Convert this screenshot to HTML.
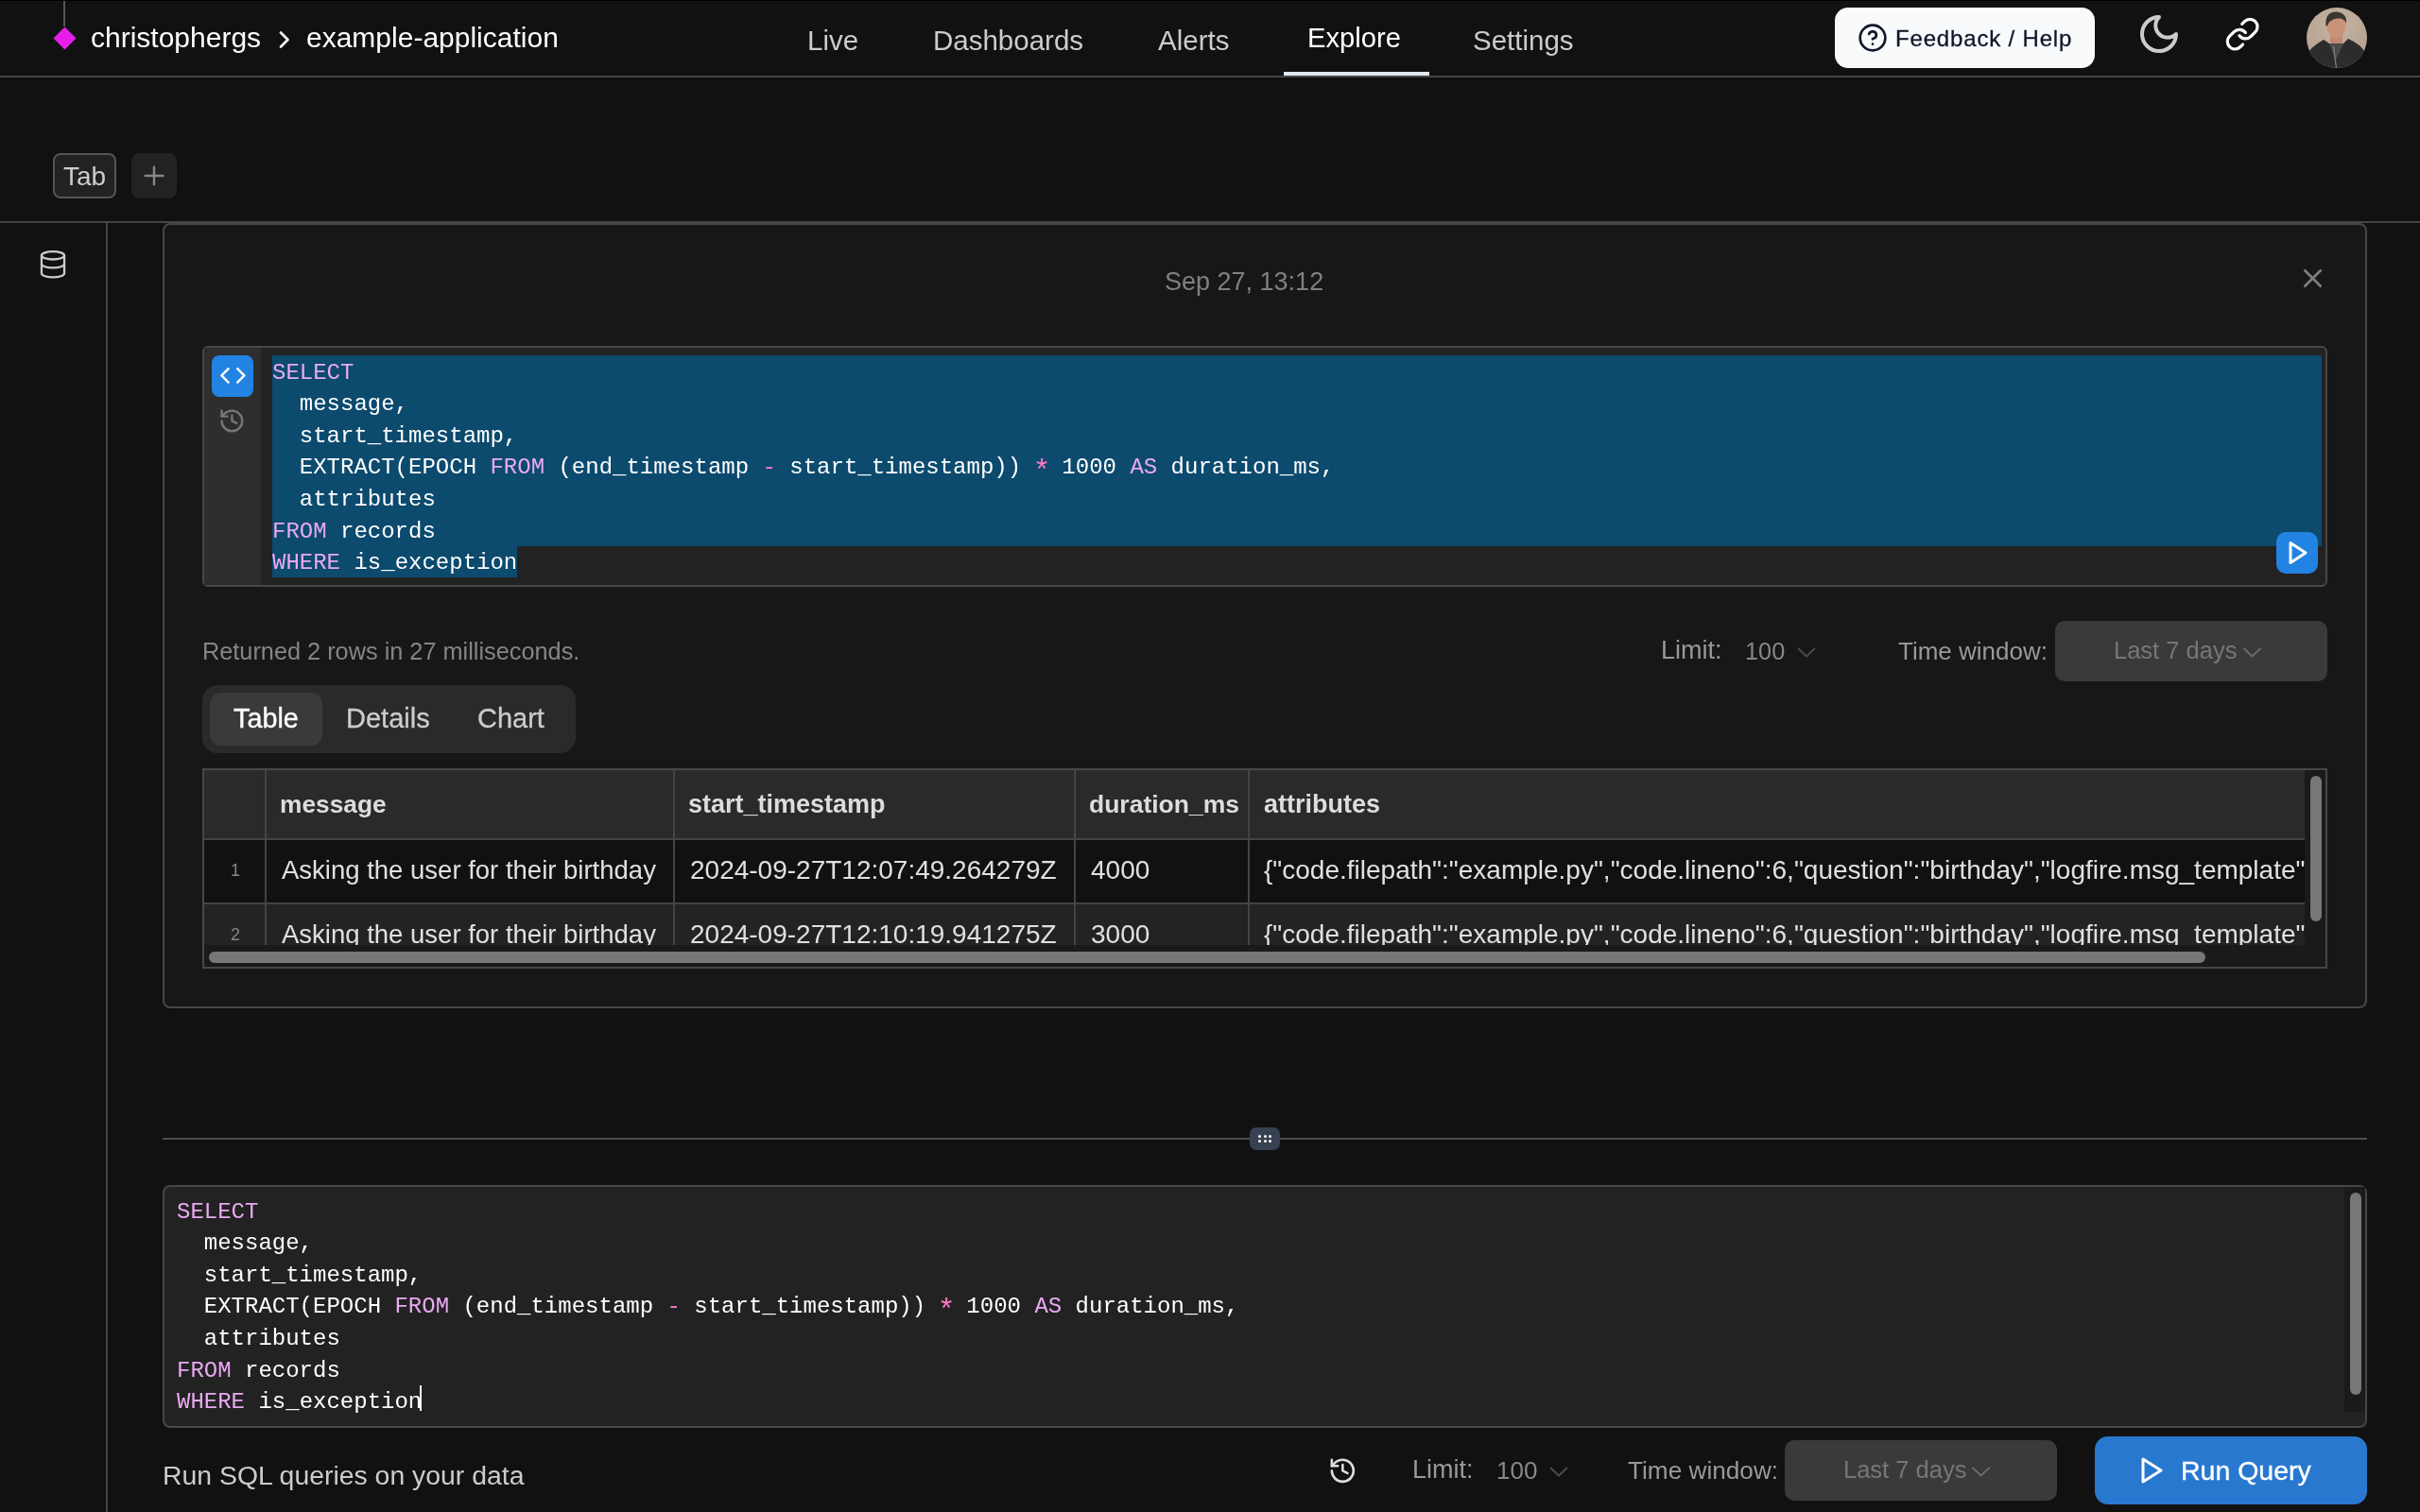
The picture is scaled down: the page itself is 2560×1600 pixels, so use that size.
<!DOCTYPE html><html><head><meta charset="utf-8"><style>
html,body{margin:0;padding:0;background:#111111;width:2560px;height:1600px;overflow:hidden;}
.t{position:absolute;white-space:pre;will-change:transform;}
.r{position:absolute;box-sizing:border-box;}
</style></head><body>
<div class="r" style="left:0px;top:0px;width:2560px;height:1px;background:#000;border-radius:0px;"></div>
<div class="r" style="left:67px;top:1px;width:2px;height:27px;background:#555;border-radius:0px;"></div>
<div class="r" style="left:59.5px;top:31.5px;width:17px;height:17px;background:#e51fe8;transform:rotate(45deg);"></div>
<div class="t" style="left:96.00px;top:24.61px;font-size:30px;line-height:30px;color:#ffffff;font-weight:400;font-family:'Liberation Sans', sans-serif;">christophergs</div>
<svg class="r" style="left:292px;top:30px;" width="20" height="24" viewBox="0 0 20 24" fill="none"><path d="M5 4.5 L12.5 12 L5 19.5" stroke="#eeeeee" stroke-width="2.8" stroke-linecap="round" stroke-linejoin="round" fill="none"/></svg>
<div class="t" style="left:324.00px;top:24.61px;font-size:30px;line-height:30px;color:#ffffff;font-weight:400;font-family:'Liberation Sans', sans-serif;">example-application</div>
<div class="t" style="left:854.00px;top:28.03px;font-size:29.5px;line-height:29.5px;color:#cccccc;font-weight:400;font-family:'Liberation Sans', sans-serif;">Live</div>
<div class="t" style="left:987.00px;top:28.03px;font-size:29.5px;line-height:29.5px;color:#cccccc;font-weight:400;font-family:'Liberation Sans', sans-serif;">Dashboards</div>
<div class="t" style="left:1225.00px;top:28.03px;font-size:29.5px;line-height:29.5px;color:#cccccc;font-weight:400;font-family:'Liberation Sans', sans-serif;">Alerts</div>
<div class="t" style="left:1382.50px;top:26.28px;font-size:29.2px;line-height:29.2px;color:#ffffff;font-weight:400;font-family:'Liberation Sans', sans-serif;">Explore</div>
<div class="t" style="left:1558.00px;top:28.03px;font-size:29.5px;line-height:29.5px;color:#cccccc;font-weight:400;font-family:'Liberation Sans', sans-serif;">Settings</div>
<div class="r" style="left:1358px;top:76px;width:154px;height:4px;background:#e2e8f0;border-radius:0px;"></div>
<div class="r" style="left:0px;top:80px;width:2560px;height:2px;background:#444444;border-radius:0px;"></div>
<div class="r" style="left:1941px;top:8px;width:275px;height:64px;background:#f8fafc;border-radius:14px;"></div>
<svg class="r" style="left:1965px;top:24px;" width="32" height="32" viewBox="0 0 24 24" fill="none"><g stroke="#0f172a" stroke-width="2" stroke-linecap="round" stroke-linejoin="round" fill="none"><circle cx="12" cy="12" r="10"/><path d="M9.09 9a3 3 0 0 1 5.83 1c0 2-3 3-3 3"/><path d="M12 17h.01"/></g></svg>
<div class="t" style="left:2005.00px;top:28.78px;font-size:24px;line-height:24px;color:#0f172a;font-weight:400;font-family:'Liberation Sans', sans-serif;letter-spacing:0.83px;-webkit-text-stroke:0.3px #0f172a;">Feedback / Help</div>
<svg class="r" style="left:2260px;top:12px;" width="48" height="48" viewBox="0 0 24 24" fill="none"><g stroke="#cccccc" stroke-width="2" stroke-linecap="round" stroke-linejoin="round" fill="none"><path d="M12 3a6 6 0 0 0 9 9 9 9 0 1 1-9-9Z"/></g></svg>
<svg class="r" style="left:2352.85px;top:16.85px;" width="38.3" height="38.3" viewBox="0 0 24 24" fill="none"><g stroke="#ffffff" stroke-width="2" stroke-linecap="round" stroke-linejoin="round" fill="none"><path d="M10 13a5 5 0 0 0 7.54.54l3-3a5 5 0 0 0-7.07-7.07l-1.72 1.71"/><path d="M14 11a5 5 0 0 0-7.54-.54l-3 3a5 5 0 0 0 7.07 7.07l1.71-1.71"/></g></svg>
<svg class="r" style="left:2440px;top:8px;" width="64" height="64" viewBox="0 0 64 64" fill="none"><defs><clipPath id="av"><circle cx="32" cy="32" r="32"/></clipPath>
<radialGradient id="avbg" cx="0.5" cy="0.3" r="0.7"><stop offset="0" stop-color="#c4b4a2"/><stop offset="1" stop-color="#b3a18d"/></radialGradient></defs>
<g clip-path="url(#av)"><rect width="64" height="64" fill="url(#avbg)"/>
<rect x="25" y="26" width="13" height="14" fill="#c08a70"/>
<ellipse cx="31.5" cy="20" rx="10" ry="11.5" fill="#c99378"/>
<path d="M20.5 19 Q19 5 31 4.5 Q43 5 42 17 Q40 11 33 11.5 Q24 12 21.5 20Z" fill="#3d3631"/>
<path d="M-2 64 L0 50 Q4 42 18 34 L24 38 L39 38 L44 33 Q58 39 62 48 L66 64Z" fill="#2c2c2c"/>
<path d="M24 38 L31 56 L39 38 Z" fill="#4b4b4b"/>
<path d="M28.5 41 L31.5 64" stroke="#8a8378" stroke-width="1.2"/>
</g></svg>
<div class="r" style="left:56px;top:162px;width:67px;height:48px;background:#222222;border-radius:8px;border:2px solid #555555;"></div>
<div class="t" style="left:66.50px;top:172.50px;font-size:28px;line-height:28px;color:#cccccc;font-weight:400;font-family:'Liberation Sans', sans-serif;">Tab</div>
<div class="r" style="left:139px;top:162px;width:48px;height:48px;background:#222222;border-radius:8px;"></div>
<svg class="r" style="left:147px;top:170px;" width="32" height="32" viewBox="0 0 24 24" fill="none"><g stroke="#888888" stroke-width="1.8" stroke-linecap="round" stroke-linejoin="round" fill="none"><path d="M5 12h14"/><path d="M12 5v14"/></g></svg>
<div class="r" style="left:0px;top:234px;width:2560px;height:2px;background:#444444;border-radius:0px;"></div>
<div class="r" style="left:112px;top:236px;width:2px;height:1364px;background:#444444;border-radius:0px;"></div>
<svg class="r" style="left:40px;top:262px;" width="32" height="36" viewBox="0 0 32 36" fill="none"><g stroke="#cccccc" stroke-width="2.3" fill="none"><ellipse cx="16" cy="8.35" rx="12.05" ry="4.15"/><path d="M3.95 8.35 V27.3 A12.05 4.15 0 0 0 28.05 27.3 V8.35"/><path d="M3.95 17.3 A12.05 4.15 0 0 0 28.05 17.3"/></g></svg>
<div class="r" style="left:172px;top:236px;width:2332px;height:831px;background:#171717;border-radius:8px;border:2px solid #474747;"></div>
<div class="t" style="left:1232.00px;top:285.44px;font-size:27px;line-height:27px;color:#808080;font-weight:400;font-family:'Liberation Sans', sans-serif;">Sep 27, 13:12</div>
<svg class="r" style="left:2429.5px;top:277.5px;" width="33" height="33" viewBox="0 0 24 24" fill="none"><g stroke="#7d7d7d" stroke-width="1.9" stroke-linecap="round" stroke-linejoin="round" fill="none"><path d="M18 6 6 18"/><path d="m6 6 12 12"/></g></svg>
<div class="r" style="left:214px;top:366px;width:2248px;height:255px;background:#222222;border-radius:6px;border:2px solid #474747;"></div>
<div class="r" style="left:216px;top:368px;width:60px;height:251px;background:#2e2e2e;border-radius:0px;"></div>
<div class="r" style="left:224px;top:376px;width:44px;height:44px;background:#2383e2;border-radius:8px;"></div>
<svg class="r" style="left:231.6px;top:383.4px;" width="28.8" height="28.8" viewBox="0 0 24 24" fill="none"><g stroke="#ffffff" stroke-width="2" stroke-linecap="round" stroke-linejoin="round" fill="none"><polyline points="16 18 22 12 16 6"/><polyline points="8 6 2 12 8 18"/></g></svg>
<svg class="r" style="left:231.35px;top:431.3px;" width="28.8" height="28.8" viewBox="0 0 24 24" fill="none"><g stroke="#777777" stroke-width="2" stroke-linecap="round" stroke-linejoin="round" fill="none"><path d="M3 12a9 9 0 1 0 9-9 9.75 9.75 0 0 0-6.74 2.74L3 8"/><path d="M3 3v5h5"/><path d="M12 7v5l4 2"/></g></svg>
<div class="r" style="left:288px;top:376px;width:2168px;height:201.60000000000002px;background:#0c4a6e;border-radius:0px;"></div>
<div class="r" style="left:288px;top:577.6px;width:259px;height:33.6px;background:#0c4a6e;border-radius:0px;"></div>
<div class="t" style="left:288.00px;top:382.60px;font-size:24px;line-height:24px;color:#ffffff;font-weight:400;font-family:'Liberation Mono', monospace;"><span style="color:#eaa9f2">SELECT</span></div>
<div class="t" style="left:288.00px;top:416.20px;font-size:24px;line-height:24px;color:#ffffff;font-weight:400;font-family:'Liberation Mono', monospace;"><span style="color:#ffffff">  message,</span></div>
<div class="t" style="left:288.00px;top:449.80px;font-size:24px;line-height:24px;color:#ffffff;font-weight:400;font-family:'Liberation Mono', monospace;"><span style="color:#ffffff">  start_timestamp,</span></div>
<div class="t" style="left:288.00px;top:483.40px;font-size:24px;line-height:24px;color:#ffffff;font-weight:400;font-family:'Liberation Mono', monospace;"><span style="color:#ffffff">  EXTRACT(EPOCH </span><span style="color:#eaa9f2">FROM</span><span style="color:#ffffff"> (end_timestamp </span><span style="color:#ff79c6">-</span><span style="color:#ffffff"> start_timestamp)) </span><span style="color:#ff79c6"><span style="display:inline-block;transform:translateY(5px) scale(1.3)">*</span></span><span style="color:#ffffff"> 1000 </span><span style="color:#eaa9f2">AS</span><span style="color:#ffffff"> duration_ms,</span></div>
<div class="t" style="left:288.00px;top:517.00px;font-size:24px;line-height:24px;color:#ffffff;font-weight:400;font-family:'Liberation Mono', monospace;"><span style="color:#ffffff">  attributes</span></div>
<div class="t" style="left:288.00px;top:550.60px;font-size:24px;line-height:24px;color:#ffffff;font-weight:400;font-family:'Liberation Mono', monospace;"><span style="color:#eaa9f2">FROM</span><span style="color:#ffffff"> records</span></div>
<div class="t" style="left:288.00px;top:584.20px;font-size:24px;line-height:24px;color:#ffffff;font-weight:400;font-family:'Liberation Mono', monospace;"><span style="color:#eaa9f2">WHERE</span><span style="color:#ffffff"> is_exception</span></div>
<div class="r" style="left:2408px;top:563px;width:44px;height:44px;background:#2383e2;border-radius:10px;"></div>
<svg class="r" style="left:2408px;top:563px;" width="44" height="44" viewBox="0 0 44 44" fill="none"><path d="M15 11.5 L31 22 L15 32.5 Z" stroke="#ffffff" stroke-width="3" stroke-linejoin="round" fill="none"/></svg>
<div class="t" style="left:214.00px;top:677.08px;font-size:25.3px;line-height:25.3px;color:#858585;font-weight:400;font-family:'Liberation Sans', sans-serif;">Returned 2 rows in 27 milliseconds.</div>
<div class="t" style="left:1757.00px;top:675.14px;font-size:27px;line-height:27px;color:#999999;font-weight:400;font-family:'Liberation Sans', sans-serif;">Limit:</div>
<div class="t" style="left:1845.50px;top:676.58px;font-size:25.3px;line-height:25.3px;color:#888888;font-weight:400;font-family:'Liberation Sans', sans-serif;">100</div>
<svg class="r" style="left:1898px;top:680px;" width="26" height="20" viewBox="0 0 26 20" fill="none"><path d="M4.5 6.5 L13 14.5 L21.5 6.5" stroke="#4a4a4a" stroke-width="2" stroke-linecap="round" stroke-linejoin="round" fill="none"/></svg>
<div class="t" style="left:2008.00px;top:675.99px;font-size:26px;line-height:26px;color:#999999;font-weight:400;font-family:'Liberation Sans', sans-serif;">Time window:</div>
<div class="r" style="left:2174px;top:657px;width:288px;height:64px;background:#3a3a3a;border-radius:10px;"></div>
<div class="t" style="left:2236.00px;top:676.41px;font-size:25.5px;line-height:25.5px;color:#777777;font-weight:400;font-family:'Liberation Sans', sans-serif;">Last 7 days</div>
<svg class="r" style="left:2370px;top:680px;" width="26" height="20" viewBox="0 0 26 20" fill="none"><path d="M4 6.5 L12.5 14.5 L21 6.5" stroke="#6a6a6a" stroke-width="2" stroke-linecap="round" stroke-linejoin="round" fill="none"/></svg>
<div class="r" style="left:214px;top:725px;width:395px;height:72px;background:#2a2a2a;border-radius:16px;"></div>
<div class="r" style="left:222px;top:733px;width:119px;height:56px;background:#3a3a3a;border-radius:12px;"></div>
<div class="t" style="left:246.50px;top:746.42px;font-size:28.8px;line-height:28.8px;color:#ffffff;font-weight:400;font-family:'Liberation Sans', sans-serif;-webkit-text-stroke:0.35px #ffffff;">Table</div>
<div class="t" style="left:365.50px;top:746.25px;font-size:29px;line-height:29px;color:#cccccc;font-weight:400;font-family:'Liberation Sans', sans-serif;-webkit-text-stroke:0.3px #cccccc;">Details</div>
<div class="t" style="left:504.50px;top:746.25px;font-size:29px;line-height:29px;color:#cccccc;font-weight:400;font-family:'Liberation Sans', sans-serif;-webkit-text-stroke:0.3px #cccccc;">Chart</div>
<div class="r" style="left:214px;top:813px;width:2248px;height:212px;background:#1a1a1a;border-radius:0px;border:2px solid #474747;"></div>
<div class="r" style="left:216px;top:815px;width:2222px;height:73px;background:#2a2a2a;border-radius:0px;"></div>
<div class="r" style="left:216px;top:888px;width:2222px;height:67px;background:#111111;border-radius:0px;"></div>
<div class="r" style="left:216px;top:957px;width:2222px;height:43px;background:#232323;border-radius:0px;"></div>
<div class="r" style="left:216px;top:887px;width:2222px;height:2px;background:#444444;border-radius:0px;"></div>
<div class="r" style="left:216px;top:955px;width:2222px;height:2px;background:#444444;border-radius:0px;"></div>
<div class="r" style="left:280px;top:815px;width:2px;height:185px;background:#444444;border-radius:0px;"></div>
<div class="r" style="left:712px;top:815px;width:2px;height:185px;background:#444444;border-radius:0px;"></div>
<div class="r" style="left:1136px;top:815px;width:2px;height:185px;background:#444444;border-radius:0px;"></div>
<div class="r" style="left:1320px;top:815px;width:2px;height:185px;background:#444444;border-radius:0px;"></div>
<div class="t" style="left:296.00px;top:838.24px;font-size:26.3px;line-height:26.3px;color:#dddddd;font-weight:700;font-family:'Liberation Sans', sans-serif;">message</div>
<div class="t" style="left:728.00px;top:837.64px;font-size:27px;line-height:27px;color:#dddddd;font-weight:700;font-family:'Liberation Sans', sans-serif;">start_timestamp</div>
<div class="t" style="left:1152.00px;top:838.07px;font-size:26.5px;line-height:26.5px;color:#dddddd;font-weight:700;font-family:'Liberation Sans', sans-serif;">duration_ms</div>
<div class="t" style="left:1336.50px;top:837.64px;font-size:27px;line-height:27px;color:#dddddd;font-weight:700;font-family:'Liberation Sans', sans-serif;">attributes</div>
<div class="r" style="left:216px;top:888px;width:2222px;height:112px;overflow:hidden;">
<div class="t" style="left:27.50px;top:24.06px;font-size:18px;line-height:18px;color:#888888;font-weight:400;font-family:'Liberation Sans', sans-serif;">1</div>
<div class="t" style="left:82.30px;top:19.32px;font-size:27.5px;line-height:27.5px;color:#e0e0e0;font-weight:400;font-family:'Liberation Sans', sans-serif;">Asking the user for their birthday</div>
<div class="t" style="left:513.60px;top:18.90px;font-size:28px;line-height:28px;color:#e0e0e0;font-weight:400;font-family:'Liberation Sans', sans-serif;">2024-09-27T12:07:49.264279Z</div>
<div class="t" style="left:937.50px;top:18.90px;font-size:28px;line-height:28px;color:#e0e0e0;font-weight:400;font-family:'Liberation Sans', sans-serif;">4000</div>
<div class="t" style="left:1120.70px;top:18.90px;font-size:28px;line-height:28px;color:#e0e0e0;font-weight:400;font-family:'Liberation Sans', sans-serif;">{&quot;code.filepath&quot;:&quot;example.py&quot;,&quot;code.lineno&quot;:6,&quot;question&quot;:&quot;birthday&quot;,&quot;logfire.msg_template&quot;</div>
<div class="t" style="left:27.50px;top:91.76px;font-size:18px;line-height:18px;color:#888888;font-weight:400;font-family:'Liberation Sans', sans-serif;">2</div>
<div class="t" style="left:82.30px;top:87.02px;font-size:27.5px;line-height:27.5px;color:#e0e0e0;font-weight:400;font-family:'Liberation Sans', sans-serif;">Asking the user for their birthday</div>
<div class="t" style="left:513.60px;top:86.60px;font-size:28px;line-height:28px;color:#e0e0e0;font-weight:400;font-family:'Liberation Sans', sans-serif;">2024-09-27T12:10:19.941275Z</div>
<div class="t" style="left:937.50px;top:86.60px;font-size:28px;line-height:28px;color:#e0e0e0;font-weight:400;font-family:'Liberation Sans', sans-serif;">3000</div>
<div class="t" style="left:1120.70px;top:86.60px;font-size:28px;line-height:28px;color:#e0e0e0;font-weight:400;font-family:'Liberation Sans', sans-serif;">{&quot;code.filepath&quot;:&quot;example.py&quot;,&quot;code.lineno&quot;:6,&quot;question&quot;:&quot;birthday&quot;,&quot;logfire.msg_template&quot;</div>
</div>
<div class="r" style="left:221px;top:1006.5px;width:2112px;height:12.5px;background:#777777;border-radius:6px;"></div>
<div class="r" style="left:2438px;top:815px;width:22px;height:208px;background:#1a1a1a;border-radius:0px;"></div>
<div class="r" style="left:2444px;top:821px;width:12px;height:154px;background:#777777;border-radius:6px;"></div>
<div class="r" style="left:172px;top:1204px;width:2332px;height:2px;background:#4d4d4d;border-radius:0px;"></div>
<div class="r" style="left:1322px;top:1193px;width:32px;height:24px;background:#374151;border-radius:7px;"></div>
<div class="r" style="left:1331.0px;top:1200.8px;width:3px;height:3px;border-radius:50%;background:#fff"></div>
<div class="r" style="left:1331.0px;top:1206.3px;width:3px;height:3px;border-radius:50%;background:#fff"></div>
<div class="r" style="left:1336.5px;top:1200.8px;width:3px;height:3px;border-radius:50%;background:#fff"></div>
<div class="r" style="left:1336.5px;top:1206.3px;width:3px;height:3px;border-radius:50%;background:#fff"></div>
<div class="r" style="left:1342.0px;top:1200.8px;width:3px;height:3px;border-radius:50%;background:#fff"></div>
<div class="r" style="left:1342.0px;top:1206.3px;width:3px;height:3px;border-radius:50%;background:#fff"></div>
<div class="r" style="left:172px;top:1254px;width:2332px;height:257px;background:#222222;border-radius:8px;border:2px solid #474747;"></div>
<div class="t" style="left:187.00px;top:1270.60px;font-size:24px;line-height:24px;color:#ffffff;font-weight:400;font-family:'Liberation Mono', monospace;"><span style="color:#eaa9f2">SELECT</span></div>
<div class="t" style="left:187.00px;top:1304.20px;font-size:24px;line-height:24px;color:#ffffff;font-weight:400;font-family:'Liberation Mono', monospace;"><span style="color:#ffffff">  message,</span></div>
<div class="t" style="left:187.00px;top:1337.80px;font-size:24px;line-height:24px;color:#ffffff;font-weight:400;font-family:'Liberation Mono', monospace;"><span style="color:#ffffff">  start_timestamp,</span></div>
<div class="t" style="left:187.00px;top:1371.40px;font-size:24px;line-height:24px;color:#ffffff;font-weight:400;font-family:'Liberation Mono', monospace;"><span style="color:#ffffff">  EXTRACT(EPOCH </span><span style="color:#eaa9f2">FROM</span><span style="color:#ffffff"> (end_timestamp </span><span style="color:#ff79c6">-</span><span style="color:#ffffff"> start_timestamp)) </span><span style="color:#ff79c6"><span style="display:inline-block;transform:translateY(5px) scale(1.3)">*</span></span><span style="color:#ffffff"> 1000 </span><span style="color:#eaa9f2">AS</span><span style="color:#ffffff"> duration_ms,</span></div>
<div class="t" style="left:187.00px;top:1405.00px;font-size:24px;line-height:24px;color:#ffffff;font-weight:400;font-family:'Liberation Mono', monospace;"><span style="color:#ffffff">  attributes</span></div>
<div class="t" style="left:187.00px;top:1438.60px;font-size:24px;line-height:24px;color:#ffffff;font-weight:400;font-family:'Liberation Mono', monospace;"><span style="color:#eaa9f2">FROM</span><span style="color:#ffffff"> records</span></div>
<div class="t" style="left:187.00px;top:1472.20px;font-size:24px;line-height:24px;color:#ffffff;font-weight:400;font-family:'Liberation Mono', monospace;"><span style="color:#eaa9f2">WHERE</span><span style="color:#ffffff"> is_exception</span></div>
<div class="r" style="left:444px;top:1466px;width:2px;height:27px;background:#ffffff;border-radius:0px;"></div>
<div class="r" style="left:2480px;top:1256px;width:22px;height:238px;background:#1a1a1a;border-radius:0px;"></div>
<div class="r" style="left:2486px;top:1262px;width:12px;height:214px;background:#777777;border-radius:6px;"></div>
<div class="t" style="left:172.30px;top:1546.96px;font-size:28.4px;line-height:28.4px;color:#cccccc;font-weight:400;font-family:'Liberation Sans', sans-serif;">Run SQL queries on your data</div>
<svg class="r" style="left:1404.75px;top:1540.55px;" width="30.7" height="30.7" viewBox="0 0 24 24" fill="none"><g stroke="#dddddd" stroke-width="2" stroke-linecap="round" stroke-linejoin="round" fill="none"><path d="M3 12a9 9 0 1 0 9-9 9.75 9.75 0 0 0-6.74 2.74L3 8"/><path d="M3 3v5h5"/><path d="M12 7v5l4 2"/></g></svg>
<div class="t" style="left:1494.00px;top:1542.14px;font-size:27px;line-height:27px;color:#999999;font-weight:400;font-family:'Liberation Sans', sans-serif;">Limit:</div>
<div class="t" style="left:1582.50px;top:1542.99px;font-size:26px;line-height:26px;color:#888888;font-weight:400;font-family:'Liberation Sans', sans-serif;">100</div>
<svg class="r" style="left:1636px;top:1547px;" width="26" height="20" viewBox="0 0 26 20" fill="none"><path d="M4.5 6.5 L13 14.5 L21.5 6.5" stroke="#4a4a4a" stroke-width="2" stroke-linecap="round" stroke-linejoin="round" fill="none"/></svg>
<div class="t" style="left:1721.50px;top:1542.82px;font-size:26.2px;line-height:26.2px;color:#999999;font-weight:400;font-family:'Liberation Sans', sans-serif;">Time window:</div>
<div class="r" style="left:1888px;top:1524px;width:288px;height:64px;background:#3a3a3a;border-radius:10px;"></div>
<div class="t" style="left:1950.00px;top:1543.41px;font-size:25.5px;line-height:25.5px;color:#777777;font-weight:400;font-family:'Liberation Sans', sans-serif;">Last 7 days</div>
<svg class="r" style="left:2083px;top:1547px;" width="26" height="20" viewBox="0 0 26 20" fill="none"><path d="M4 6.5 L12.5 14.5 L21 6.5" stroke="#6a6a6a" stroke-width="2" stroke-linecap="round" stroke-linejoin="round" fill="none"/></svg>
<div class="r" style="left:2216px;top:1520px;width:288px;height:72px;background:#2878d0;border-radius:14px;"></div>
<svg class="r" style="left:2256px;top:1536px;" width="40" height="40" viewBox="0 0 40 40" fill="none"><path d="M11 8 L30 20 L11 32 Z" stroke="#ffffff" stroke-width="3" stroke-linejoin="round" fill="none"/></svg>
<div class="t" style="left:2306.70px;top:1541.87px;font-size:28.5px;line-height:28.5px;color:#ffffff;font-weight:400;font-family:'Liberation Sans', sans-serif;-webkit-text-stroke:0.35px #ffffff;">Run Query</div>
</body></html>
